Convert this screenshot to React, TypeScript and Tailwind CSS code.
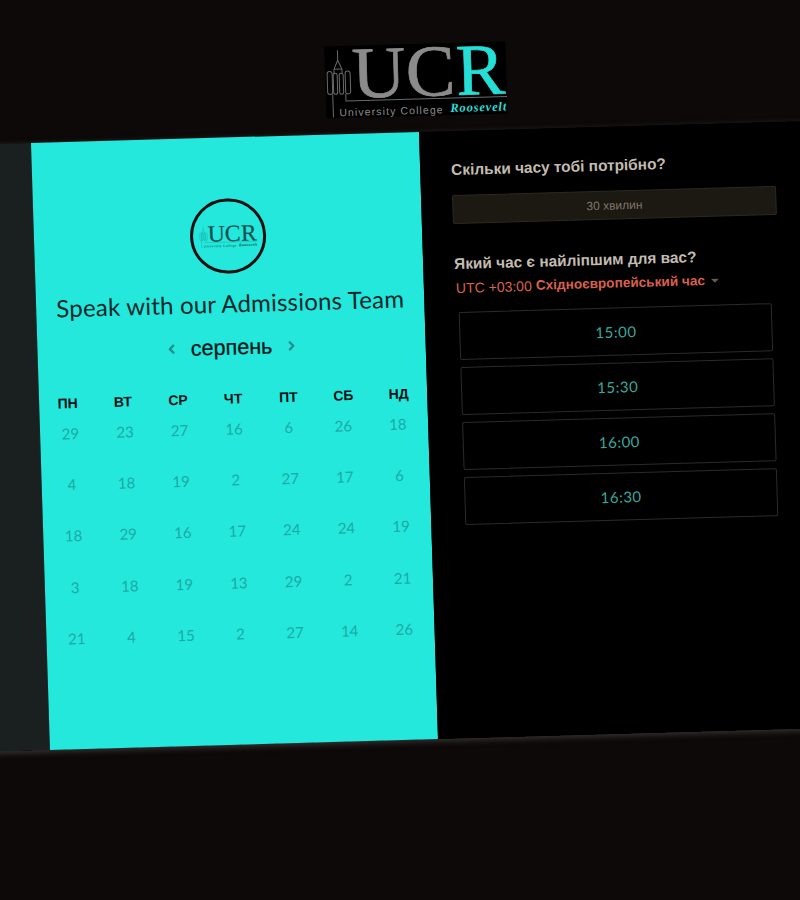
import React from "react";
import { ChevronLeft, ChevronRight } from "lucide-react";

const dayNames = ["ПН", "ВТ", "СР", "ЧТ", "ПТ", "СБ", "НД"];
const dates = [
  29, 23, 27, 16, 6, 26, 18,
  4, 18, 19, 2, 27, 17, 6,
  18, 29, 16, 17, 24, 24, 19,
  3, 18, 19, 13, 29, 2, 21,
  21, 4, 15, 2, 27, 14, 26,
];
const slots = ["15:00", "15:30", "16:00", "16:30"];

interface UcrLogoProps {
  className: string;
  main: string;
  accent: string;
  line: string;
}

function UcrLogo({ className, main, accent, line }: UcrLogoProps) {
  return (
    <svg viewBox="0 2 181 72" className={`overflow-visible ${className}`}>
      {/* tower */}
      <g fill="none" stroke={line} strokeWidth="1">
        <path d="M13 6 L13 16 L9 25 L9 30 M13 16 L17 25 L17 30" />
        <path d="M9 25 L17 25" />
        <rect x="2" y="27" width="5" height="23" rx="2.5" />
        <rect x="8" y="29" width="4" height="21" rx="2" />
        <rect x="14" y="29" width="4" height="21" rx="2" />
        <rect x="20" y="27" width="5" height="23" rx="2.5" />
        <path d="M7 50 L7 73 M20 50 L20 57 L181 57" />
      </g>
      <text x="27" y="54" fontFamily="'Liberation Serif', serif" fontSize="73" textLength="103" lengthAdjust="spacingAndGlyphs" fill={main} stroke={main} strokeWidth="0.7">
        UC
      </text>
      <text x="131" y="54" fontFamily="'Liberation Serif', serif" fontSize="73" fill={accent} stroke={accent} strokeWidth="0.7">
        R
      </text>
      <text x="13" y="72" fontFamily="'Liberation Sans', sans-serif" fontSize="10.5" letterSpacing="1.1" fill={main}>
        University College
      </text>
      <text x="124" y="71" fontFamily="'Liberation Serif', serif" fontSize="12.5" fontStyle="italic" fontWeight="700" textLength="56" lengthAdjust="spacing" fill={accent}>
        Roosevelt
      </text>
    </svg>
  );
}

export default function App() {
  return (
    <div className="w-[800px] h-[900px] overflow-hidden bg-[#0c0908] font-['Liberation_Sans',sans-serif]">
      <div className="w-[895px] origin-top-left [transform:matrix(1,-0.0284,0.0313,1,-34.48,1.73)]">
        {/* Header */}
        <div className="h-[143px] pt-[55px] flex justify-center">
          <UcrLogo className="w-[181px] h-[72px] bg-black" main="#8b8b8b" accent="#25dfd6" line="#6a6a6a" />
        </div>

        <div className="flex h-[607px] shadow-[0_2px_6px_rgba(80,72,72,0.7)]">
          <div className="w-[61px] bg-[#1a2020]" />

          {/* Calendar */}
          <div className="w-[388px] bg-[#24e8dc] flex flex-col items-center pt-[61px]">
            <div className="w-[76px] h-[75px] rounded-full border-[3px] border-[#0a0f10] flex items-center justify-center">
              <UcrLogo className="w-[58px] h-[23px]" main="#0b4f50" accent="#0b4f50" line="#14908c" />
            </div>
            <h1 className="mt-[14px] h-[32px] leading-[32px] text-[24px] text-[#06282b] font-['Lato',sans-serif] tracking-[0.2px]">
              Speak with our Admissions Team
            </h1>
            <div className="mt-[14px] h-[28px] flex items-center justify-center">
              <ChevronLeft size={14} strokeWidth={4} className="text-[#188f8c]" />
              <span className="mx-[12px] text-[21.5px] leading-[28px] text-[#03181a] [-webkit-text-stroke:0.3px_#03181a]">серпень</span>
              <ChevronRight size={14} strokeWidth={4} className="text-[#188f8c]" />
            </div>
            <div className="mt-[27px] w-full px-[1px] grid grid-cols-7 h-[20px]">
              {dayNames.map((day) => (
                <div key={day} className="text-center text-[14px] leading-[20px] font-bold text-[#031214]">
                  {day}
                </div>
              ))}
            </div>
            <div className="mt-[10px] w-full px-[3px] grid grid-cols-7 gap-y-[31.2px]">
              {dates.map((date, i) => (
                <div key={i} className="text-center text-[15px] leading-[20px] font-['Lato',sans-serif] text-[#1aaaa6]">
                  {date}
                </div>
              ))}
            </div>
          </div>

          {/* Time picker */}
          <div className="flex-1 bg-black pt-[29px] pl-[31px]">
            <h2 className="h-[20px] leading-[20px] text-[15.4px] font-bold text-[#c2bbb0]">
              Скільки часу тобі потрібно?
            </h2>
            <div className="mt-[15px] w-[324px] h-[29px] rounded-[2px] bg-[#1c1812] border border-[#2d2922] flex items-center justify-center text-[12px] text-[#7d7668]">
              30 хвилин
            </div>
            <h2 className="mt-[30px] h-[20px] leading-[20px] text-[15.4px] font-bold text-[#c2bbb0]">
              Який час є найліпшим для вас?
            </h2>
            <div className="mt-[4px] ml-[1px] h-[20px] flex items-center text-[#d9604d]">
              <span className="text-[14px]">UTC +03:00</span>
              <span className="ml-[4px] text-[13.6px] font-bold">Східноєвропейський час</span>
              <svg viewBox="0 0 8 4" className="ml-[6px] w-[8px] h-[4px]">
                <path d="M0 0 L8 0 L4 4 Z" fill="#665e58" />
              </svg>
            </div>
            <div className="mt-[14px] ml-[3px] w-[313px] flex flex-col gap-[7px]">
              {slots.map((slot) => (
                <div
                  key={slot}
                  className="h-[48px] rounded-[2px] border border-[#2b2b2b] flex items-center justify-center text-[15px] tracking-[0.5px] font-['Lato',sans-serif] text-[#3aa89d]"
                >
                  {slot}
                </div>
              ))}
            </div>
          </div>
        </div>
      </div>
    </div>
  );
}
